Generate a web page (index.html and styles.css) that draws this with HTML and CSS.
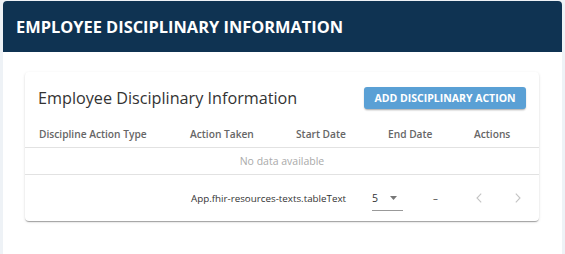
FILE: index.html
```html
<!DOCTYPE html>
<html lang="en">
<head>
<meta charset="utf-8">
<title>Employee Disciplinary Information</title>
<link rel="stylesheet" href="styles.css">
</head>
<body>
<div class="page">
  <section class="panel">
    <header class="panel-header">EMPLOYEE DISCIPLINARY INFORMATION</header>
    <div class="panel-body">
      <div class="card">
        <div class="card-title-row">
          <h2 class="card-title">Employee Disciplinary Information</h2>
          <button class="btn-primary" type="button">ADD DISCIPLINARY ACTION</button>
        </div>
        <div class="table">
          <div class="thead">
            <span class="th">Discipline Action Type</span>
            <span class="th">Action Taken</span>
            <span class="th">Start Date</span>
            <span class="th">End Date</span>
            <span class="th">Actions</span>
          </div>
          <div class="empty-row">No data available</div>
          <div class="table-footer">
            <span class="rows-label">App.fhir-resources-texts.tableText</span>
            <div class="rows-select">
              <span class="rows-value">5</span>
              <svg class="select-arrow" width="7" height="4" viewBox="0 0 7 4"><path d="M0 0H7L3.5 4Z" fill="#777"/></svg>
            </div>
            <span class="range">–</span>
            <button class="page-btn" type="button" aria-label="Previous page">
              <svg width="6" height="10" viewBox="0 0 6 10"><path d="M5.2 0.6L1 5L5.2 9.4" fill="none" stroke="#c4c4c4" stroke-width="1.1"/></svg>
            </button>
            <button class="page-btn last" type="button" aria-label="Next page">
              <svg width="6" height="10" viewBox="0 0 6 10"><path d="M0.8 0.6L5 5L0.8 9.4" fill="none" stroke="#c4c4c4" stroke-width="1.1"/></svg>
            </button>
          </div>
        </div>
      </div>
    </div>
  </section>
</div>
</body>
</html>
```

FILE: styles.css
```css
* { box-sizing: border-box; }

html, body {
  margin: 0;
  height: 100%;
  background: #eef2f6;
  font-family: "Open Sans", "Liberation Sans", sans-serif;
}

.page {
  padding: 1px 3px 0 3px;
  height: 100%;
}

.panel {
  background: #fff;
  border-radius: 4px 4px 0 0;
  height: 100%;
  overflow: hidden;
}

.panel-header {
  background: #0f3352;
  color: #fff;
  height: 51px;
  display: flex;
  align-items: center;
  padding-left: 13px;
  font-size: 16.4px;
  font-weight: 700;
}

.panel-body {
  padding: 20px 23px 0 22px;
}

.card {
  background: #fff;
  border-radius: 4px;
  box-shadow: 0 2px 1px -1px rgba(0,0,0,.2), 0 1px 1px 0 rgba(0,0,0,.14), 0 1px 3px 0 rgba(0,0,0,.12);
  height: 149px;
}

.card-title-row {
  height: 49px;
  display: flex;
  align-items: center;
  justify-content: space-between;
  padding: 2px 13px 0 13px;
}

.card-title {
  margin: 0;
  font-size: 16.2px;
  font-weight: 400;
  color: #333;
}

.btn-primary {
  height: 22px;
  width: 162px;
  border: 0;
  border-radius: 3px;
  background: #5aa0d5;
  color: #fff;
  font-family: inherit;
  font-size: 10.5px;
  font-weight: 700;
  padding: 0;
  box-shadow: 0 2px 2px -1px rgba(0,0,0,.25), 0 1px 2px rgba(0,0,0,.12);
}

.thead {
  display: grid;
  grid-template-columns: 151px 106px 92px 86px auto;
  align-items: center;
  height: 27px;
  padding-left: 14px;
  border-bottom: 1px solid #e2e2e2;
}

.th {
  font-size: 10.2px;
  font-weight: 600;
  color: #666;
}

.empty-row {
  height: 27px;
  display: flex;
  align-items: center;
  justify-content: center;
  font-size: 10.5px;
  color: #aaa;
  border-bottom: 1px solid #e2e2e2;
}

.table-footer {
  height: 46px;
  display: flex;
  align-items: center;
  padding-left: 166px;
  font-size: 9.8px;
  color: #333;
}

.table-footer > * { flex-shrink: 0; }

.rows-label {
  width: 181px;
}

.rows-select {
  width: 31px;
  height: 22px;
  display: flex;
  align-items: center;
  gap: 12px;
  border-bottom: 1px solid #999;
  margin-top: 4px;
  padding-bottom: 4px;
}

.rows-value {
  font-size: 10.5px;
}

.range {
  margin-left: 30px;
  width: 43px;
}

.page-btn {
  width: 39px;
  height: 20px;
  border: 0;
  background: none;
  padding: 0;
  display: flex;
  align-items: center;
  justify-content: flex-start;
}

.page-btn.last { width: 10px; }
```
